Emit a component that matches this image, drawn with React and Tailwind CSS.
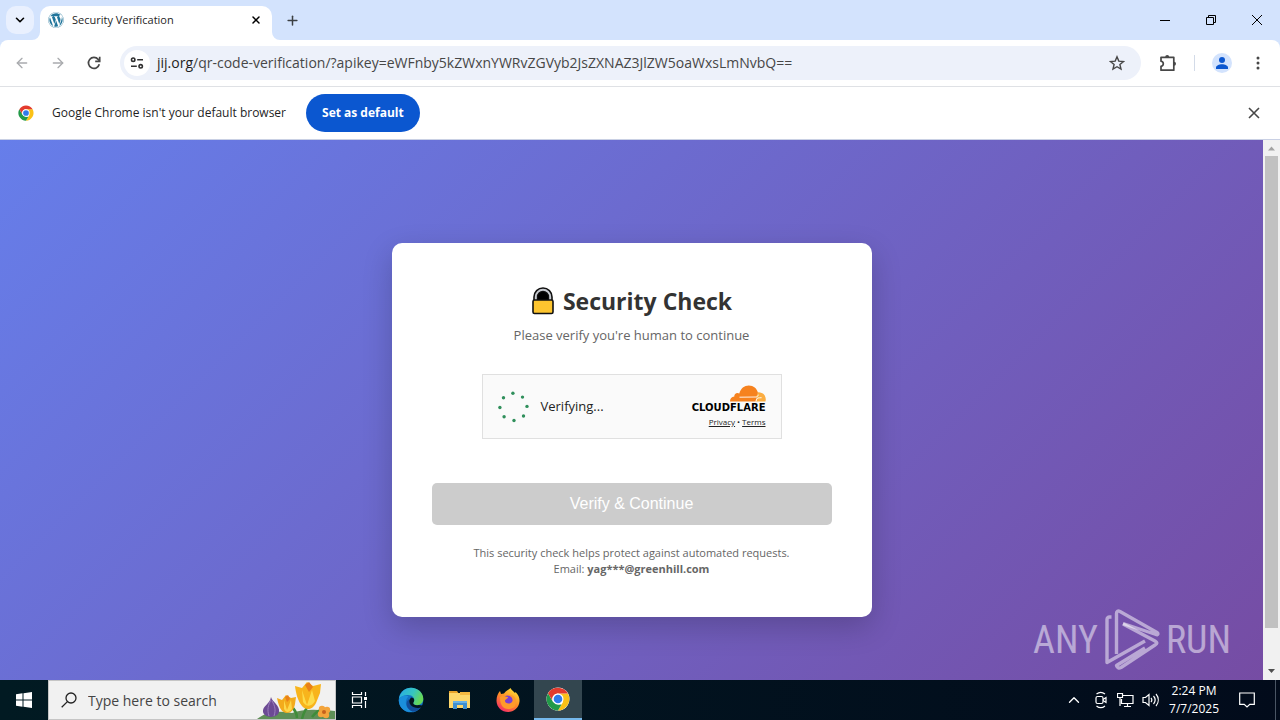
import React from 'react';
import { FaWordpress } from 'react-icons/fa';
import { ChevronDown, ChevronUp, X, Plus, ArrowLeft, ArrowRight } from 'lucide-react';

const URL_HOST = 'jij.org';
const URL_PATH =
  '/qr-code-verification/?apikey=eWFnby5kZWxnYWRvZGVyb2JsZXNAZ3JlZW5oaWxsLmNvbQ==';

const ChromeLogo = ({ className }) => (
  <svg className={className} viewBox="0 0 48 48" aria-hidden="true">
    <circle cx="24" cy="24" r="23" fill="#fff" />
    <path fill="#fbc116" d="M24 13h19.900A23 23 0 0 1 24 47l10-17.200z" />
    <path fill="#229a48" d="M24 47A23 23 0 0 1 4.100 12.500L14 29.800 24 35h7z" />
    <path fill="#e33b2e" d="M4.100 12.500A23 23 0 0 1 43.900 13H24A11 11 0 0 0 14 29.600z" />
    <circle cx="24" cy="24" r="11" fill="#fff" />
    <circle cx="24" cy="24" r="8.600" fill="#2f7bea" />
  </svg>
);

const TabStrip = () => (
  <header className="flex h-10 shrink-0 items-center bg-[#d3e3fd] pl-1.5">
    <button
      aria-label="Search tabs"
      className="flex size-7 items-center justify-center rounded-[10px] bg-[#e9f0fe]"
    >
      <ChevronDown size={14} strokeWidth={2.8} />
    </button>
    <div className="relative ml-1.5 flex w-58 items-center self-stretch">
      <div className="absolute inset-x-0 top-1.5 bottom-0 rounded-t-[10px] bg-white" />
      <svg className="absolute -left-2 bottom-0 size-2" viewBox="0 0 8 8" aria-hidden="true">
        <path d="M8 0v8H0a8 8 0 0 0 8-8z" fill="#fff" />
      </svg>
      <svg className="absolute -right-2 bottom-0 size-2" viewBox="0 0 8 8" aria-hidden="true">
        <path d="M0 0v8h8a8 8 0 0 1-8-8z" fill="#fff" />
      </svg>
      <div className="relative flex flex-1 items-center pr-2 pl-2">
        <FaWordpress size={16} color="#21759b" />
        <span className="ml-2 flex-1 text-[11px] text-[#1f1f1f]">Security Verification</span>
        <button aria-label="Close tab" className="flex size-4 items-center justify-center">
          <X size={12} strokeWidth={3} />
        </button>
      </div>
    </div>
    <button aria-label="New tab" className="ml-3 flex size-4 items-center justify-center text-[#3c4043]">
      <Plus size={15} strokeWidth={2.4} />
    </button>
    <div className="ml-auto flex text-black">
      <button aria-label="Minimize" className="flex h-10 w-[46px] items-center justify-center">
        <svg width="10" height="10" viewBox="0 0 10 10" stroke="currentColor">
          <path d="M0 5.5h10" />
        </svg>
      </button>
      <button aria-label="Restore" className="flex h-10 w-[46px] items-center justify-center">
        <svg width="10" height="10" viewBox="0 0 10 10" fill="none" stroke="currentColor">
          <path d="M.5 2.5h7v7h-7zM2.5 2.5v-2h7v7h-2" />
        </svg>
      </button>
      <button aria-label="Close" className="flex h-10 w-[46px] items-center justify-center">
        <svg width="10" height="10" viewBox="0 0 10 10" stroke="currentColor">
          <path d="M0 0l10 10M10 0L0 10" />
        </svg>
      </button>
    </div>
  </header>
);

const Toolbar = () => (
  <div className="shrink-0 bg-[#d3e3fd]">
    <div className="flex h-[47px] items-center rounded-t-lg border-b border-[#dfe1e5] bg-white pl-3.5 text-[#474747]">
      <button aria-label="Back" className="text-[#a9abae]">
        <ArrowLeft size={16} strokeWidth={2} />
      </button>
      <button aria-label="Forward" className="ml-5 text-[#a9abae]">
        <ArrowRight size={16} strokeWidth={2} />
      </button>
      <button aria-label="Reload" className="ml-5">
        <svg width="16" height="16" viewBox="0 0 16 16" fill="none" stroke="currentColor" strokeWidth="1.7">
          <path d="M13.3 9.3A5.5 5.5 0 1 1 12.2 4.4L13.6 6" />
          <path d="M13.7 1.8v4.500H9.2" />
        </svg>
      </button>
      <form className="ml-[18px] flex h-[34px] flex-1 items-center rounded-full bg-[#edf1fa] pl-1">
        <button
          type="button"
          aria-label="View site information"
          className="flex size-[26px] items-center justify-center rounded-full bg-white text-[#303030]"
        >
          <svg width="14" height="14" viewBox="0 0 14 14" fill="none" stroke="currentColor" strokeWidth="1.6">
            <circle cx="3.2" cy="3.7" r="1.7" />
            <path d="M7.2 3.7H13M1 10.3h5.8" />
            <circle cx="10.7" cy="10.3" r="1.7" />
          </svg>
        </button>
        <div className="ml-[7px] flex-1 text-[14px] leading-5 whitespace-nowrap">
          <span className="text-[#1f1f1f]">{URL_HOST}</span>
          {URL_PATH}
        </div>
        <button type="button" aria-label="Bookmark this tab" className="mr-4">
          <svg width="16" height="16" viewBox="0 0 16 16" fill="none" stroke="currentColor" strokeWidth="1.4">
            <path d="M8 1.8l1.8 4.3 4.7.4-3.6 3 1.1 4.6L8 11.7l-4 2.4 1.1-4.6-3.6-3 4.7-.4z" />
          </svg>
        </button>
      </form>
      <button aria-label="Extensions" className="ml-[18px]">
        <svg width="18" height="18" viewBox="0 0 18 18">
          <path
            d="M2 3.3h12.8v12.9H2v-3.800c1.500-.3 2.300-1.200 2.300-2.600S3.500 7.500 2 7.200z"
            fill="none"
            stroke="currentColor"
            strokeWidth="1.7"
            strokeLinejoin="round"
          />
          <path d="M6.200 3a2 2 0 0 1 4 0zM15 7.800a2 2 0 0 1 0 4z" fill="currentColor" />
        </svg>
      </button>
      <div className="mx-[17px] h-4 w-px bg-[#d3dbe8]" />
      <button aria-label="Profile">
        <svg width="20" height="20" viewBox="0 0 20 20">
          <circle cx="10" cy="10" r="10" fill="#d3e3fd" />
          <circle cx="10" cy="7" r="3" fill="#0b57d0" />
          <path d="M4 16v-1.500c0-2 3-3.300 6-3.300s6 1.300 6 3.300V16z" fill="#0b57d0" />
        </svg>
      </button>
      <button aria-label="Menu" className="mr-3.5 ml-[18px]">
        <svg width="16" height="16" viewBox="0 0 16 16" fill="currentColor">
          <circle cx="8" cy="3" r="1.500" />
          <circle cx="8" cy="8" r="1.500" />
          <circle cx="8" cy="13" r="1.500" />
        </svg>
      </button>
    </div>
  </div>
);

const DefaultBrowserBar = () => (
  <div className="flex h-[53px] shrink-0 items-center border-b border-[#c9d0e4] bg-white pr-5 pl-[18px]">
    <ChromeLogo className="size-4" />
    <p className="ml-[18px] text-[12px] text-[#1f1f1f]">
      Google Chrome isn't your default browser
    </p>
    <button className="ml-5 h-[38px] rounded-full bg-[#0b57d0] px-4 text-[12px] font-bold text-white">
      Set as default
    </button>
    <button aria-label="Dismiss" className="ml-auto text-[#474747]">
      <svg width="12" height="12" viewBox="0 0 12 12" stroke="currentColor" strokeWidth="1.6">
        <path d="M1 1l10 10M11 1L1 11" />
      </svg>
    </button>
  </div>
);

const LockIcon = () => (
  <svg width="24" height="28" viewBox="0 0 24 28" aria-hidden="true">
    <path d="M3.500 13V10a8.500 8.500 0 0 1 17 0v3" fill="#111" stroke="#111" strokeWidth="2.6" />
    <path d="M4.800 13v-3a7.200 7.200 0 0 1 14.400 0v3" fill="none" stroke="#c9ccd2" strokeWidth="2" />
    <path d="M7 13v-3a5 5 0 0 1 10 0v3z" fill="#000" />
    <rect x="2" y="13" width="20" height="13.500" rx="1.500" fill="#fdc52f" stroke="#111" strokeWidth="1.600" />
  </svg>
);

const CloudflareLogo = () => (
  <svg width="36" height="17" viewBox="0 0 36 17" aria-hidden="true">
    <path
      d="M0 16.500c0-3 1.600-4.900 4.300-5.100-.2-2.700 2.800-4.300 5-2.800C10.600 3.400 14.400.5 18.800.5c4.700 0 8.200 3 9.200 7.400l-2 8.600z"
      fill="#f6821f"
    />
    <path d="M26 16.500l1-2.700c.3-1-.2-1.500-1.200-1.600L28.200 7.200c4.400-.2 7.600 3 7.600 7.300l-.3 2z" fill="#fbad41" />
    <path
      d="M9.500 12.200l16.700-.2c1.200 0 1.800-1.200 2.200-2.300M25.800 16.500l.8-2.300c.5-1.500 1.900-1.300 5-1.500"
      fill="none"
      stroke="#fff"
      strokeWidth="0.9"
    />
  </svg>
);

const Spinner = () => (
  <svg width="32" height="32" viewBox="0 0 32 32" fill="#2f8f5b" role="img" aria-label="Loading">
    <circle cx="14.900" cy="2.300" r="1.700" />
    <circle cx="24.500" cy="6.100" r="1.700" />
    <circle cx="29" cy="15.400" r="1.700" />
    <circle cx="25.500" cy="25" r="1.700" />
    <circle cx="16" cy="29.500" r="1.700" />
    <circle cx="6.100" cy="25.800" r="1.700" />
    <circle cx="1.900" cy="16.500" r="1.700" />
    <circle cx="5.500" cy="6.700" r="1.700" />
  </svg>
);

const Turnstile = () => (
  <div className="mx-auto mt-[29px] flex h-[65px] w-[300px] items-center justify-between border border-[#e0e0e0] bg-[#fafafa] px-[15px] text-[#232323]">
    <div className="flex items-center gap-[11px]">
      <Spinner />
      <span className="text-[13px]">Verifying...</span>
    </div>
    <div className="flex flex-col items-end">
      <CloudflareLogo />
      <span className="font-['DejaVu_Sans',sans-serif] text-[10px] leading-3 font-bold text-black">
        CLOUDFLARE
      </span>
      <div className="mt-0.5 flex gap-0.5 text-[8px] leading-3">
        <a href="#privacy" className="underline">Privacy</a>
        <span>•</span>
        <a href="#terms" className="underline">Terms</a>
      </div>
    </div>
  </div>
);

const SecurityCard = () => (
  <main className="w-full max-w-[480px] rounded-[10px] bg-white p-10 text-center shadow-[0_10px_30px_rgba(0,0,0,0.2)]">
    <h1 className="flex items-center justify-center gap-2 text-[23px] leading-9 font-bold text-[#333]">
      <LockIcon />
      Security Check
    </h1>
    <p className="mt-1.5 text-[13px] leading-5 text-[#666]">Please verify you're human to continue</p>
    <Turnstile />
    <button
      disabled
      className="mt-11 h-[42px] w-full rounded-[5px] bg-[#ccc] font-['Liberation_Sans',Arial,sans-serif] text-[16px] text-white"
    >
      Verify &amp; Continue
    </button>
    <p className="mt-5 text-[11px] leading-4 text-[#666]">
      This security check helps protect against automated requests.
      <br />
      Email: <strong>yag***@greenhill.com</strong>
    </p>
  </main>
);

const Scrollbar = () => (
  <div className="flex w-[17px] shrink-0 flex-col items-center bg-[#f1f1f1]">
    <svg width="17" height="16" viewBox="0 0 17 16" aria-hidden="true">
      <path d="M5 10.500h7L8.500 6.500z" fill="#a3a3a3" />
    </svg>
    <div className="w-[13px] flex-[472] bg-[#c1c1c1]" />
    <div className="flex-[36]" />
    <svg width="17" height="16" viewBox="0 0 17 16" aria-hidden="true">
      <path d="M5 5h7L8.500 9z" fill="#505050" />
    </svg>
  </div>
);

const Watermark = () => (
  <div className="absolute right-8 bottom-2 flex h-16 items-center gap-1.5 font-['Roboto_Condensed','Roboto',sans-serif] text-[38px] leading-none text-white/50">
    <span>ANY</span>
    <svg
      width="56"
      height="64"
      viewBox="0 0 56 64"
      fill="none"
      stroke="currentColor"
      strokeWidth="3.4"
      strokeLinejoin="round"
      aria-hidden="true"
    >
      <path d="M7.500 9H5.500C4 9 3 10 3 11.500V54.500L41 33" />
      <path d="M12.500 46V5.500C12.500 3 14 2.500 16 3.500L53 24.500C54.500 25.500 54 27.500 52 26.500L19 15.500" />
      <path d="M19 16L51 33C53.500 34.500 53.500 35.500 51 37L17 59.500C15 60.500 13.500 60 12.500 57.500L41 40" />
    </svg>
    <span>RUN</span>
  </div>
);

const SearchArt = () => (
  <svg width="78" height="38" viewBox="0 0 78 38" className="self-end" aria-hidden="true">
    <path d="M0 38c8-7 22-9 35-6 12-5 30-3 43-2v8z" fill="#5f8f57" />
    <path d="M40 37c0-6-3-9-6-12M45 38c2-8 5-12 8-14M55 36c4-5 7-7 10-7" stroke="#3f8c3a" strokeWidth="2.5" fill="none" />
    <path d="M14 16c1 5 9 8 8 15-1 6-14 7-16 0-1-6 7-8 8-15z" fill="#6c4a94" />
    <path d="M14 19c-3 5-4 10-2 16M15 20c3 5 4 9 2 15" stroke="#9b7fbd" fill="none" />
    <path d="M20 17l5 2 4-5 5 3 5-1-1 7c-1 6-4 9-8 9-5 0-8-5-10-15z" fill="#f3ab1c" />
    <path d="M27 19l3 10 4-10 1 9c-3 4-6 4-8 0z" fill="#fdd74a" />
    <path d="M38 5l7 2 5-6 6 4 8-2-1 9-4 10c-4 8-11 7-14 3-4-5-6-12-7-20z" fill="#f8b41c" />
    <path d="M45 9l5 15 5-15 3 11c-3 6-9 6-12 1z" fill="#fddb4a" />
    <path d="M48 4l4-3 4 5-4 5zM28 16l3-2 2 4-3 3z" fill="#e98119" />
    <g fill="#f3a43c">
      <circle cx="65" cy="28" r="3.2" />
      <circle cx="70" cy="29" r="3.2" />
      <circle cx="69" cy="34" r="3.2" />
      <circle cx="64" cy="33" r="3.2" />
    </g>
    <circle cx="67" cy="31" r="2" fill="#c6611c" />
  </svg>
);

const EdgeIcon = () => (
  <svg width="26" height="26" viewBox="0 0 26 26" aria-hidden="true">
    <defs>
      <linearGradient id="edge-top" x1="0" y1="0" x2="1" y2="0.4">
        <stop offset="0" stopColor="#27a8e8" />
        <stop offset="0.6" stopColor="#36c6c0" />
        <stop offset="1" stopColor="#66d858" />
      </linearGradient>
    </defs>
    <circle cx="13" cy="13" r="12.3" fill="#1272c4" />
    <path d="M1 12C2 5 7 .7 13 .7c7 0 12.300 5 12.300 11 0 4-3 6.300-6.300 6.300-3 0-4.800-1.200-3.600-3 2-4-1-7-5-7-4.400 0-8 2-9.400 4z" fill="url(#edge-top)" />
    <path d="M10.500 9.500C6 13 7 22 15 25 6 26 1 20 .8 13c2-4 6-5.500 9.700-3.500z" fill="#1b8fdc" />
    <path d="M11 12c-1 5 4 9.500 13 7-2 3.500-5.500 5.600-9.500 5.600C8.500 22 6.500 15.500 11 12z" fill="#124d99" />
    <path d="M13 10.500c3.500 0 4 3 2.400 5-.8 2 2 3.300 5.400 2.500l4 .5-1 2c-8 2-13.500-2.500-12.500-7.500z" fill="#04151f" />
  </svg>
);

const FolderIcon = () => (
  <svg width="24" height="20" viewBox="0 0 24 20" aria-hidden="true">
    <path d="M1 1h8l2 3H1z" fill="#e8a32a" />
    <path d="M1 3h21v15H1z" fill="#fdd76b" />
    <path d="M12 2h10v3H12z" fill="#f5b941" />
    <path d="M5 11h14v8h-4v-4H9v4H5z" fill="#3e8fd0" />
    <path d="M5 11h14v2H5z" fill="#67b1e6" />
  </svg>
);

const FirefoxIcon = () => (
  <svg width="24" height="24" viewBox="0 0 24 24" aria-hidden="true">
    <defs>
      <linearGradient id="fox" x1="0.8" y1="0" x2="0.2" y2="1">
        <stop offset="0" stopColor="#ffe437" />
        <stop offset="0.5" stopColor="#ff8b26" />
        <stop offset="1" stopColor="#f5256c" />
      </linearGradient>
    </defs>
    <path d="M4 3l1 3 3-.5C10 2.500 13 2 14.500 0c.5 2 3 3 4.500 5l.5-1c3 3 4.300 6 4 9.500C23 19.500 18 24 12 24S.7 19.500.5 13C.4 9 2 5 4 3z" fill="url(#fox)" />
    <circle cx="12" cy="12.500" r="5" fill="#7b3fd2" />
    <path d="M4 9c3-2 5 0 8 0 0 2-3 2-3 4s4 4 7 1c2-3-1-6-4-7 4-1 8 2 8 7s-3 7-8 7-8-4-8-12z" fill="#ff9a2b" />
  </svg>
);

const Taskbar = () => (
  <footer className="flex h-10 shrink-0 items-center bg-linear-to-r from-[#011a22] to-[#020b1b] text-white">
    <button aria-label="Start" className="flex w-12 items-center justify-center">
      <svg width="16" height="16" viewBox="0 0 16 16" fill="#fff">
        <path d="M0 2.300l6.500-1v6.200H0zM7.500 1.200L16 0v7.500H7.500zM0 8.500h6.500v6.200L0 13.700zM7.500 8.500H16V16l-8.500-1.200z" />
      </svg>
    </button>
    <label className="flex h-10 w-72 items-center overflow-hidden border border-[#c5c5c5] bg-[#f1f1f1] pl-3 text-[#333]">
      <svg width="16" height="16" viewBox="0 0 16 16" fill="none" stroke="#222" strokeWidth="1.3" className="shrink-0">
        <circle cx="10" cy="6" r="5" />
        <path d="M6.400 9.600L.7 15.300" />
      </svg>
      <input
        aria-label="Search"
        placeholder="Type here to search"
        className="ml-[11px] min-w-0 flex-1 text-[14px] outline-none placeholder:text-[#444]"
      />
      <SearchArt />
    </label>
    <button aria-label="Task View" className="flex w-12 items-center justify-center">
      <svg width="18" height="16" viewBox="0 0 18 16" fill="none" stroke="#fff" strokeWidth="1.2">
        <path d="M1.500 0v2.500h9V0M1.500 5h9v6h-9zM1.500 16v-2.500h9V16M14.500 0v4M14.500 9v7" />
        <path d="M13 5h3v3h-3z" fill="#fff" stroke="none" />
      </svg>
    </button>
    <button aria-label="Microsoft Edge" className="flex w-[54px] items-center justify-center">
      <EdgeIcon />
    </button>
    <button aria-label="File Explorer" className="flex w-11 items-center justify-center">
      <FolderIcon />
    </button>
    <button aria-label="Firefox" className="flex w-[52px] items-center justify-center">
      <FirefoxIcon />
    </button>
    <button
      aria-label="Google Chrome"
      className="flex h-10 w-12 items-center justify-center border-b-2 border-[#76b9ed] bg-[#33464f]"
    >
      <ChromeLogo className="size-6" />
    </button>
    <div className="ml-auto flex items-center">
      <button aria-label="Show hidden icons" className="mr-2.5">
        <ChevronUp size={18} strokeWidth={1.8} />
      </button>
      <svg width="16" height="18" viewBox="0 0 16 18" fill="none" stroke="#fff" strokeWidth="1.2" className="mr-2" aria-hidden="true">
        <rect x="3" y="5.500" width="7" height="7" rx="1.500" />
        <path d="M10 8.500l3-2v5l-3-2M3.500 3c2.500-2 6-2 8.500 0M3.500 15c2.500 2 6 2 8.500 0" />
      </svg>
      <svg width="17" height="16" viewBox="0 0 17 16" fill="none" stroke="#fff" strokeWidth="1.2" className="mr-2" aria-hidden="true">
        <path d="M5.500 3.500h10.500v8H4.500V7M10.500 11.500v3M7 14.500h7M.5 1.500h5v4h-5zM3 5.500V14" />
      </svg>
      <svg width="17" height="16" viewBox="0 0 17 16" fill="none" stroke="#fff" strokeWidth="1.2" className="mr-2.5" aria-hidden="true">
        <path d="M1 5.500h2.500L7 2.500v11l-3.500-3H1zM9 6c1 1.200 1 2.800 0 4M11.500 4c2 2.400 2 5.600 0 8M14 2c3 3.600 3 8.400 0 12" />
      </svg>
      <time className="text-center text-[12px] leading-[18px] whitespace-nowrap">
        2:24 PM
        <br />
        7/7/2025
      </time>
      <button aria-label="Notifications" className="mr-5 ml-5">
        <svg width="16" height="16" viewBox="0 0 16 16" fill="none" stroke="#fff" strokeWidth="1.2">
          <path d="M.7 1h14.600v11.300h-4.500L8 15l-2.800-2.700H.7z" />
        </svg>
      </button>
      <div className="mr-1 h-10 w-px bg-[#4a5564]" />
    </div>
  </footer>
);

export default function App() {
  return (
    <div className="flex h-screen flex-col overflow-hidden font-['Segoe_UI','Open_Sans','Noto_Sans',sans-serif]">
      <TabStrip />
      <Toolbar />
      <DefaultBrowserBar />
      <div className="flex min-h-0 flex-1">
        <div className="relative flex-1 overflow-hidden bg-[#764ba2]">
          <div className="flex min-h-[calc(100%+40px)] items-center justify-center bg-[linear-gradient(135deg,#667eea_0%,#764ba2_100%)] p-5">
            <SecurityCard />
          </div>
          <Watermark />
        </div>
        <Scrollbar />
      </div>
      <Taskbar />
    </div>
  );
}
